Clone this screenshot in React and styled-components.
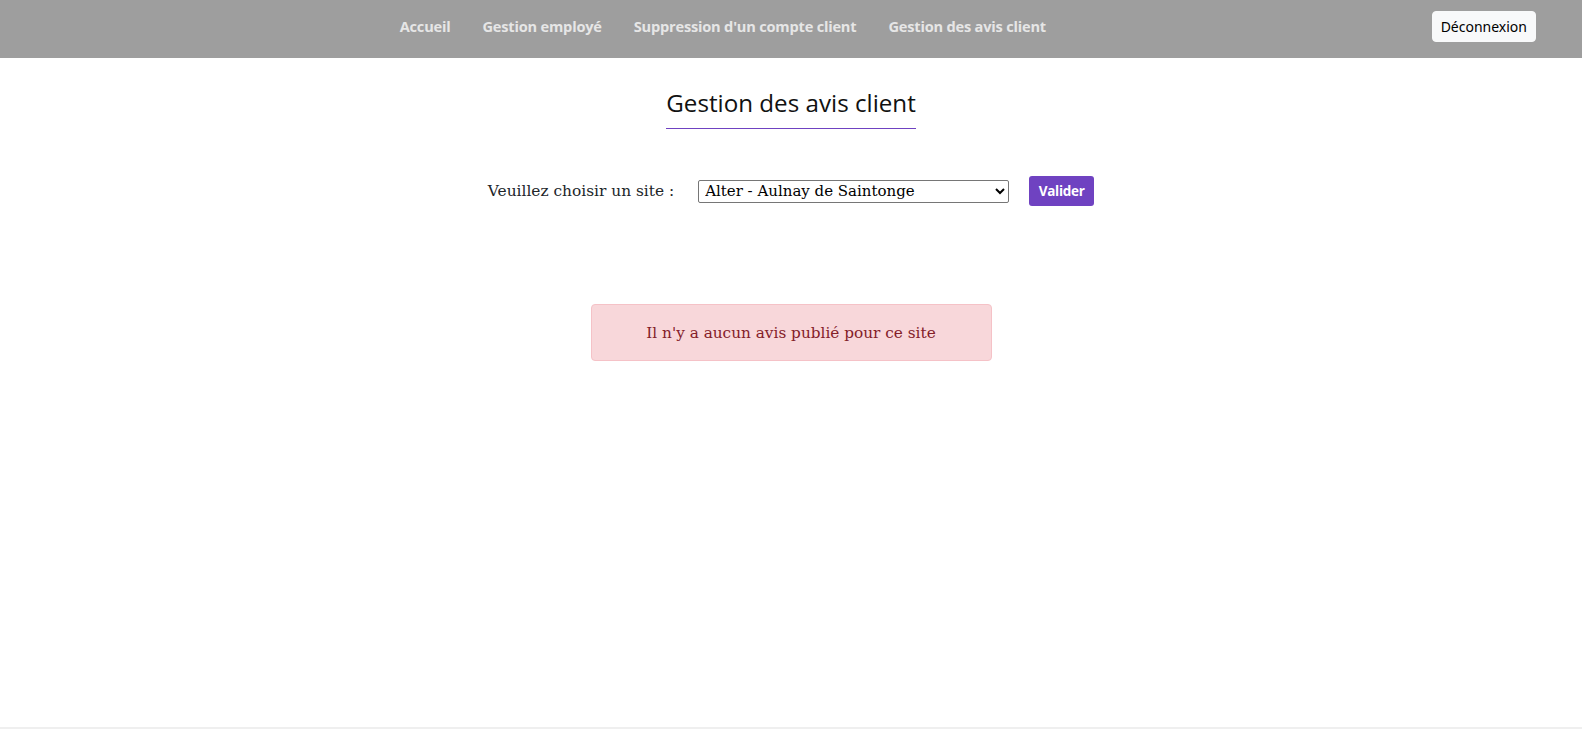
import React, { useState } from "react";
import styled, { createGlobalStyle } from "styled-components";

const sites = [
  "Alter - Aulnay de Saintonge",
  "Alter - Saint-Jean-d'Angély",
  "Alter - Saintes",
];

const links = [
  "Accueil",
  "Gestion employé",
  "Suppression d'un compte client",
  "Gestion des avis client",
];

const App = () => {
  const [site, setSite] = useState(sites[0]);

  return (
    <>
      <GlobalStyle />
      <Page>
        <NavBar>
          <NavLinks>
            {links.map((label) => (
              <NavLink key={label} href="#">
                {label}
              </NavLink>
            ))}
          </NavLinks>
          <LogoutButton>Déconnexion</LogoutButton>
        </NavBar>

        <Main>
          <Title>Gestion des avis client</Title>
          <SiteForm onSubmit={(e) => e.preventDefault()}>
            <FormLabel htmlFor="site">Veuillez choisir un site :</FormLabel>
            <SiteSelect
              id="site"
              value={site}
              onChange={(e) => setSite(e.target.value)}
            >
              {sites.map((s) => (
                <option key={s}>{s}</option>
              ))}
            </SiteSelect>
            <SubmitButton type="submit">Valider</SubmitButton>
          </SiteForm>
          <Alert>Il n'y a aucun avis publié pour ce site</Alert>
        </Main>

        <Footer />
      </Page>
    </>
  );
};

export default App;

const GlobalStyle = createGlobalStyle`
  * {
    box-sizing: border-box;
  }
  body {
    margin: 0;
    background: #ffffff;
    font-family: "DejaVu Serif", "Liberation Serif", serif;
    color: #212529;
  }
`;

const Page = styled.div`
  display: flex;
  flex-direction: column;
  min-height: 729px;
`;

const NavBar = styled.nav`
  display: flex;
  align-items: center;
  height: 58px;
  background-color: #9e9e9e;
  padding-right: 46px;
`;

const NavLinks = styled.div`
  flex: 1;
  display: flex;
  justify-content: center;
  gap: 32px;
  padding-left: 14px;
  padding-bottom: 7px;
`;

const NavLink = styled.a`
  font-family: "Open Sans", "Noto Sans", sans-serif;
  font-weight: 700;
  font-size: 14.6px;
  letter-spacing: -0.2px;
  color: #e6e6e6;
  text-decoration: none;
`;

const LogoutButton = styled.button`
  height: 31px;
  padding: 0 8px;
  font-family: "Noto Sans", "Open Sans", sans-serif;
  font-size: 14px;
  color: #000000;
  background-color: #f8f9fa;
  border: 1px solid #f8f9fa;
  border-radius: 4px;
  margin-bottom: 6px;
`;

const Main = styled.main`
  flex: 1;
  display: flex;
  flex-direction: column;
  align-items: center;
`;

const Title = styled.h2`
  margin: 29px 0 0;
  padding-bottom: 9px;
  font-family: "Open Sans", "Noto Sans", sans-serif;
  font-weight: 400;
  font-size: 24.2px;
  line-height: 32px;
  color: #111111;
  border-bottom: 1px solid #6f42c1;
`;

const SiteForm = styled.form`
  display: flex;
  align-items: center;
  margin-top: 47px;
`;

const FormLabel = styled.label`
  font-size: 15.4px;
  color: #212529;
  margin-right: 24px;
`;

const SiteSelect = styled.select`
  width: 311px;
  height: 23px;
  font-family: "DejaVu Serif", serif;
  font-size: 15px;
  color: #000000;
  background: #ffffff;
  border: 1px solid #767676;
  border-radius: 2px;
  padding: 0 2px;
  margin-right: 20px;
`;

const SubmitButton = styled.button`
  width: 65px;
  height: 30px;
  font-family: "Open Sans", "Noto Sans", sans-serif;
  font-weight: 700;
  font-size: 13.5px;
  letter-spacing: -0.3px;
  color: #ffffff;
  background-color: #6f42c1;
  border: none;
  border-radius: 3px;
`;

const Alert = styled.div`
  width: 401px;
  height: 57px;
  margin-top: 98px;
  display: flex;
  align-items: center;
  justify-content: center;
  font-size: 15.3px;
  color: #842029;
  background-color: #f8d7da;
  border: 1px solid #f5c2c7;
  border-radius: 4px;
`;

const Footer = styled.footer`
  height: 2px;
  background-color: #efefef;
`;
